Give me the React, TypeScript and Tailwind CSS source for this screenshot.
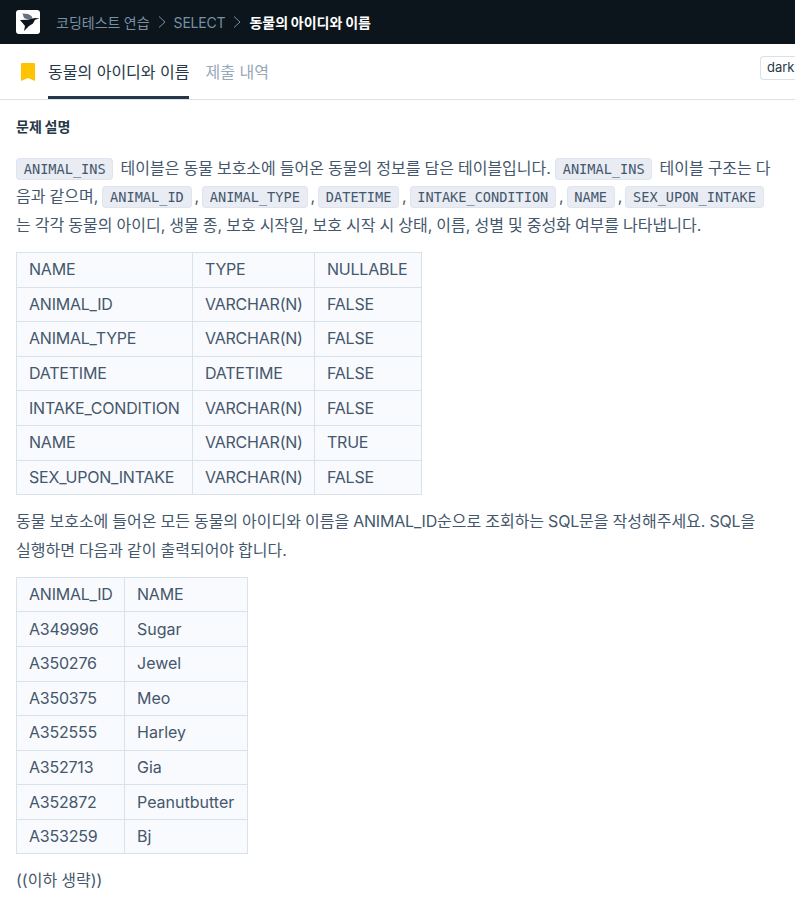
function Code({ children, wide }: { children: string; wide?: boolean }) {
  return (
    <code
      className={`rounded-[4px] border border-[#dfe5ee] bg-[#e9ecf3] px-[6.8px] py-[2px] font-['DejaVu_Sans_Mono',monospace] text-[13.6px] leading-none text-[#44576c] ${
        wide ? "mr-[3px]" : ""
      }`}
    >
      {children}
    </code>
  );
}

function Sep() {
  return <span className="[word-spacing:-1.6px]"> , </span>;
}

function DataTable({ rows, className, widths }: { rows: string[][]; className: string; widths: string[] }) {
  return (
    <table className={`table-fixed border-collapse text-[16px] leading-[22px] text-[#44576c] ${className}`}>
      <tbody>
        {rows.map((row, r) => (
          <tr key={r}>
            {row.map((c, i) => (
              <td
                key={i}
                className={`h-[34.6px] border border-[#d7e2eb] bg-[#f9fafd] px-[12px] pb-[1px] pt-0 whitespace-nowrap ${widths[i]} ${
                  /^[A-Z0-9_()]+$/.test(c) ? "tracking-[-0.22px]" : ""
                }`}
              >
                {c}
              </td>
            ))}
          </tr>
        ))}
      </tbody>
    </table>
  );
}

const t1 = [
  ["NAME", "TYPE", "NULLABLE"],
  ["ANIMAL_ID", "VARCHAR(N)", "FALSE"],
  ["ANIMAL_TYPE", "VARCHAR(N)", "FALSE"],
  ["DATETIME", "DATETIME", "FALSE"],
  ["INTAKE_CONDITION", "VARCHAR(N)", "FALSE"],
  ["NAME", "VARCHAR(N)", "TRUE"],
  ["SEX_UPON_INTAKE", "VARCHAR(N)", "FALSE"],
];
const t2 = [
  ["ANIMAL_ID", "NAME"],
  ["A349996", "Sugar"],
  ["A350276", "Jewel"],
  ["A350375", "Meo"],
  ["A352555", "Harley"],
  ["A352713", "Gia"],
  ["A352872", "Peanutbutter"],
  ["A353259", "Bj"],
];

function Chevron({ className }: { className: string }) {
  return (
    <svg className={className} width="8" height="12" viewBox="0 0 8 12" fill="none" stroke="#7790a4" strokeWidth="1">
      <path d="M1 0.5 L7 6 L1 11.5" />
    </svg>
  );
}

export default function App() {
  return (
    <div className="h-[904px] w-[795px] overflow-hidden bg-white font-['Inter','Noto_Sans_CJK_KR',sans-serif]">
      <header className="flex h-[44px] items-center bg-[#0c151c] pl-[16px] text-[14px] [word-spacing:-0.5px]">
        <div className="flex h-[24px] w-[24px] items-center justify-center rounded-[3px] bg-white">
          <svg width="24" height="24" viewBox="0 0 24 24">
            <path d="M6.5 3.5 L12 4 L15.5 6 L16.5 8.5 L12 9.5 L8 8 Z" fill="#667080" />
            <path d="M4 10 L12 9.8 L16.5 8.5 L19 8 L23.5 8.5 L19 9.8 L17 13.5 L13 16 L8 21 L9 16 L7 13.5 Z" fill="#0c151c" />
          </svg>
        </div>
        <span className="ml-[16px] text-[#7790a4]">코딩테스트 연습</span>
        <Chevron className="ml-[8px] mr-[8px]" />
        <span className="tracking-[-0.2px] text-[#7790a4]">SELECT</span>
        <Chevron className="ml-[8px] mr-[8px]" />
        <span className="font-bold text-white">동물의 아이디와 이름</span>
      </header>

      <nav className="flex h-[56px] items-stretch border-b border-[#d7e2eb]">
        <svg className="ml-[21px] mt-[19px]" width="14" height="18" viewBox="0 0 14 18">
          <path d="M0 1 Q0 0 1 0 H13 Q14 0 14 1 V18 L7 15 L0 18 Z" fill="#ffc300" />
        </svg>
        <div className="relative ml-[13px] flex items-center text-[16px] text-[#263747]">
          동물의 아이디와 이름
          <div className="absolute inset-x-0 bottom-0 h-[3px] bg-[#263747]" />
        </div>
        <div className="ml-[16px] flex items-center text-[16px] text-[#98a8b9]">제출 내역</div>
        <div className="ml-auto mt-[12px] flex h-[24px] w-[35px] items-center rounded-l-[4px] border border-r-0 border-[#d7e2eb] pl-[6px] text-[13px] text-[#263747]">
          dark
        </div>
      </nav>

      <main className="pl-[16px] pr-[23px] text-[#44576c]">
        <h5 className="mt-[18px] text-[14px] font-bold leading-[18px] text-[#263747] [word-spacing:-0.5px]">문제 설명</h5>
        <p className="mt-[17.6px] text-[16px] leading-[28.8px] [word-spacing:-0.45px]">
          <Code wide>ANIMAL_INS</Code> 테이블은 동물 보호소에 들어온 동물의 정보를 담은 테이블입니다. <Code wide>ANIMAL_INS</Code> 테이블 구조는 다음과 같으며, <Code>ANIMAL_ID</Code><Sep /><Code>ANIMAL_TYPE</Code><Sep /><Code>DATETIME</Code><Sep /><Code>INTAKE_CONDITION</Code><Sep /><Code>NAME</Code><Sep /><Code>SEX_UPON_INTAKE</Code> 는 각각 동물의 아이디, 생물 종, 보호 시작일, 보호 시작 시 상태, 이름, 성별 및 중성화 여부를 나타냅니다.
        </p>
        <DataTable rows={t1} className="mt-[12px] w-[405px]" widths={["w-[176px]", "w-[122px]", "w-[107px]"]} />
        <p className="mt-[12px] text-[16px] leading-[28.8px] [word-spacing:-0.5px]">
          동물 보호소에 들어온 모든 동물의 아이디와 이름을 <span className="tracking-[-0.19px]">ANIMAL_ID</span>순으로 조회하는 <span className="tracking-[-0.19px]">SQL</span>문을 작성해주세요. <span className="tracking-[-0.19px]">SQL</span>을 실행하면 다음과 같이 출력되어야 합니다.
        </p>
        <DataTable rows={t2} className="mt-[12px] w-[231px]" widths={["w-[108px]", "w-[123px]"]} />
        <p className="mt-[12px] text-[16px] leading-[28.8px] [word-spacing:-0.4px]">((이하 생략))</p>
      </main>
    </div>
  );
}
